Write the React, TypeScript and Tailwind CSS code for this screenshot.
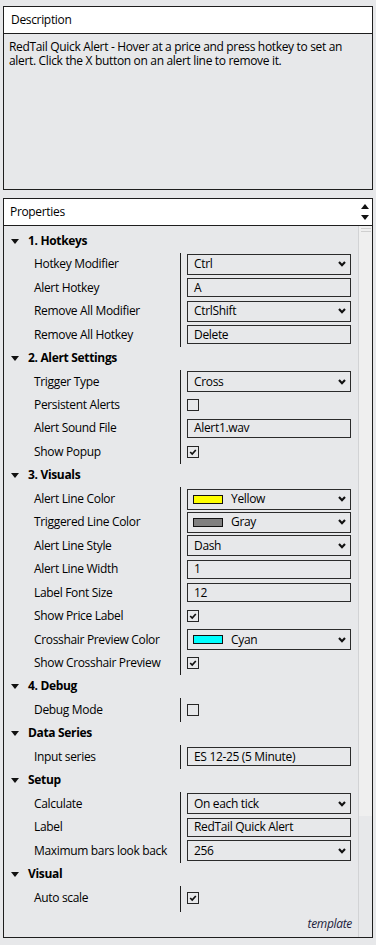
import React from "react";

type Prop = {
  label: string;
  kind: "select" | "text" | "check" | "stub";
  value?: string;
  checked?: boolean;
  swatch?: string;
};

type Group = { title: string; props: Prop[] };

const groups: Group[] = [
  {
    title: "1. Hotkeys",
    props: [
      { label: "Hotkey Modifier", kind: "select", value: "Ctrl" },
      { label: "Alert Hotkey", kind: "text", value: "A" },
      { label: "Remove All Modifier", kind: "select", value: "CtrlShift" },
      { label: "Remove All Hotkey", kind: "text", value: "Delete" },
    ],
  },
  {
    title: "2. Alert Settings",
    props: [
      { label: "Trigger Type", kind: "select", value: "Cross" },
      { label: "Persistent Alerts", kind: "check", checked: false },
      { label: "Alert Sound File", kind: "text", value: "Alert1.wav" },
      { label: "Show Popup", kind: "check", checked: true },
    ],
  },
  {
    title: "3. Visuals",
    props: [
      { label: "Alert Line Color", kind: "select", value: "Yellow", swatch: "#ffff00" },
      { label: "Triggered Line Color", kind: "select", value: "Gray", swatch: "#808080" },
      { label: "Alert Line Style", kind: "select", value: "Dash" },
      { label: "Alert Line Width", kind: "text", value: "1" },
      { label: "Label Font Size", kind: "text", value: "12" },
      { label: "Show Price Label", kind: "check", checked: true },
      { label: "Crosshair Preview Color", kind: "select", value: "Cyan", swatch: "#00ffff" },
      { label: "Show Crosshair Preview", kind: "check", checked: true },
    ],
  },
  {
    title: "4. Debug",
    props: [{ label: "Debug Mode", kind: "check", checked: false }],
  },
  {
    title: "Data Series",
    props: [{ label: "Input series", kind: "text", value: "ES 12-25 (5 Minute)" }],
  },
  {
    title: "Setup",
    props: [
      { label: "Calculate", kind: "select", value: "On each tick" },
      { label: "Label", kind: "text", value: "RedTail Quick Alert" },
      { label: "Maximum bars look back", kind: "select", value: "256" },
    ],
  },
  {
    title: "Visual",
    props: [
      { label: "Auto scale", kind: "check", checked: true },
      // next row is scrolled out of view, only its box top edge shows
      { label: "", kind: "stub" },
    ],
  },
];

const Chevron = () => (
  <svg width="8" height="6" viewBox="0 0 8 6" className="shrink-0">
    <path d="M1 1 L4 4.3 L7 1" stroke="#111" strokeWidth="2.1" fill="none" />
  </svg>
);

const Check = () => (
  <svg width="10" height="10" viewBox="0 0 10 10">
    <path d="M2.2 5 L4.2 7 L7.8 3" stroke="#111" strokeWidth="1.7" fill="none" />
  </svg>
);

const Value: React.FC<{ p: Prop }> = ({ p }) => {
  if (p.kind === "stub") {
    return <div className="w-[164px] h-[19px] border-t border-[#2b2b2b]" />;
  }
  if (p.kind === "check") {
    return (
      <div className="w-[12px] h-[12px] border border-[#262626] flex items-center justify-center">
        {p.checked && <Check />}
      </div>
    );
  }
  if (p.kind === "text") {
    return (
      <div className="w-[164px] h-[19px] border border-[#2b2b2b] flex items-center pl-[6px] whitespace-nowrap">
        {p.value}
      </div>
    );
  }
  return (
    <div className="w-[164px] h-[21px] border border-[#2b2b2b] flex items-center pl-[5px] pr-[4px] whitespace-nowrap">
      {p.swatch && (
        <span
          className="w-[30px] h-[9px] border border-[#111] mr-[8px] shrink-0"
          style={{ backgroundColor: p.swatch }}
        />
      )}
      <span className={p.swatch ? "flex-1" : "flex-1 pl-[1px]"}>{p.value}</span>
      <Chevron />
    </div>
  );
};

const App: React.FC = () => {
  return (
    <div className="w-[376px] h-[945px] bg-[#e7e8ea] pt-[6px] px-[3px] text-[12px] tracking-[-0.33px] text-black font-['Open_Sans','Noto_Sans',sans-serif] leading-[14.4px]">
      <div className="h-[184px] border border-[#1e1e1e] flex flex-col">
        <div className="h-[27px] bg-white border-b border-[#1e1e1e] flex items-center pl-[7px]">
          Description
        </div>
        <div className="pt-[6px] pl-[5px] pr-[4px]">
          RedTail Quick Alert - Hover at a price and press hotkey to set an alert. Click the X
          button on an alert line to remove it.
        </div>
      </div>

      <div className="mt-[8px] h-[740px] border border-[#1e1e1e] flex flex-col">
        <div className="h-[27px] bg-white border-b border-[#1e1e1e] flex items-center pl-[6px]">
          <span className="flex-1">Properties</span>
          <div className="w-[14px] flex flex-col items-center gap-[6px]">
            <svg width="8" height="5" viewBox="0 0 8 5">
              <polygon points="0,5 8,5 4,0" fill="#111" />
            </svg>
            <svg width="8" height="5" viewBox="0 0 8 5">
              <polygon points="0,0 8,0 4,5" fill="#111" />
            </svg>
          </div>
        </div>

        <div className="flex-1 flex min-h-0">
          <div className="flex-1 flex flex-col min-w-0">
            <div className="h-[686px] overflow-hidden pt-[3.3px]">
              {groups.map((g) => (
                <div key={g.title}>
                  <div className="h-[23.46px] flex items-center">
                    <svg width="8" height="5" viewBox="0 0 8 5" className="ml-[7px] mr-[9px]">
                      <polygon points="0,0 8,0 4,5" fill="#111" />
                    </svg>
                    <span className="font-bold">{g.title}</span>
                  </div>
                  <div className="flex">
                    <div className="w-[176px]">
                      {g.props.map((p, i) => (
                        <div key={i} className="h-[23.46px] flex items-center pl-[30px] whitespace-nowrap">
                          {p.label}
                        </div>
                      ))}
                    </div>
                    <div className="w-[1px] bg-[#1e1e1e]" />
                    <div className="flex-1 pl-[6px]">
                      {g.props.map((p, i) => (
                        <div key={i} className="h-[23.46px] flex items-center">
                          <Value p={p} />
                        </div>
                      ))}
                    </div>
                  </div>
                </div>
              ))}
            </div>
            <div className="flex-1 flex items-center justify-end pr-[6px]">
              <span className="italic text-[#1c1c3c]">template</span>
            </div>
          </div>

          <div className="w-[14px] border-l border-[#d2d3d5] flex flex-col">
            <div className="h-[590px] bg-[#efefef] pt-[2px] flex flex-col items-center gap-[2px]">
              <div className="w-[10px] h-[1px] bg-[#cfcfcf]" />
              <div className="w-[10px] h-[1px] bg-[#cfcfcf]" />
            </div>
          </div>
        </div>
      </div>
    </div>
  );
};

export default App;
